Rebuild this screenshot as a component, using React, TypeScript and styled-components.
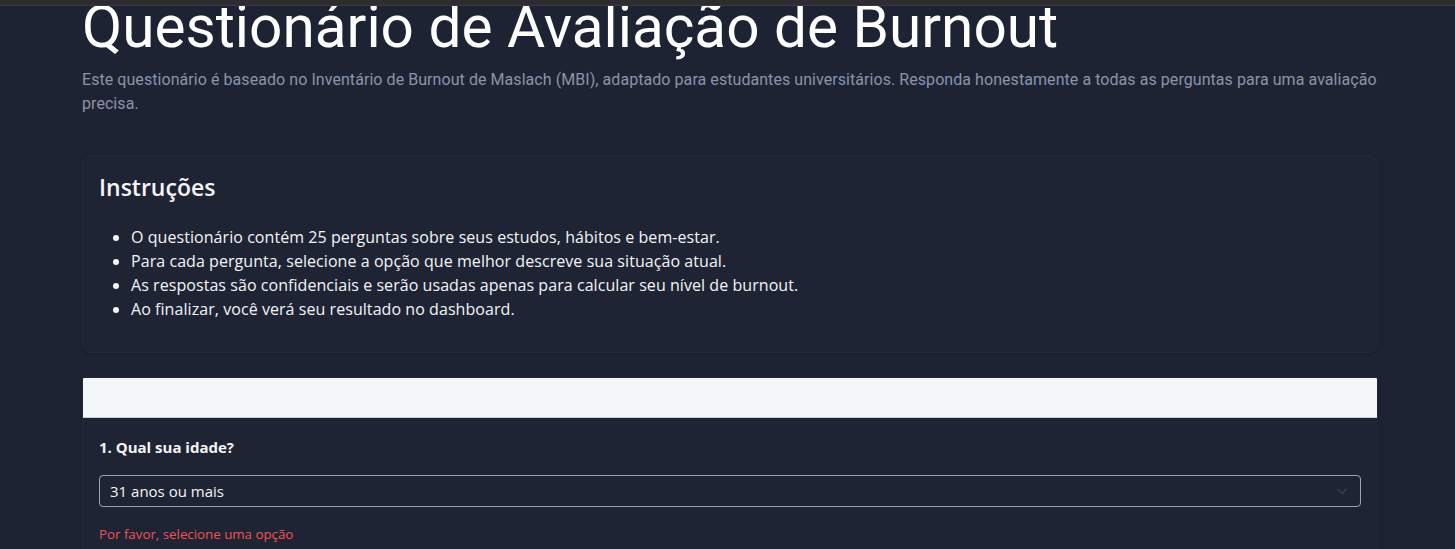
import React from 'react'
import styled, { createGlobalStyle } from 'styled-components'

const GlobalStyle = createGlobalStyle`
  html, body {
    margin: 0;
    padding: 0;
    background: #1e2333;
    overflow: hidden;
  }
  body {
    font-family: "Open Sans", "Noto Sans", sans-serif;
    color: #f3f4f6;
  }
`

const TopBar = styled.div`
  height: 5px;
  background: #2c2c31;
  border-bottom: 1px solid #3a3b41;
  position: relative;
  z-index: 2;
`

const Page = styled.main`
  width: 1296px;
  margin: 0 0 0 82px;
  padding: 0 0 40px;
  display: flex;
  flex-direction: column;
`

const Title = styled.h1`
  margin: -15px 0 0;
  font-family: Roboto, "Liberation Sans", sans-serif;
  font-weight: 400;
  font-size: 58.5px;
  line-height: 72px;
  color: #ffffff;
  white-space: nowrap;
`

const Lead = styled.p`
  margin: 5px 0 0;
  font-family: Roboto, "Liberation Sans", sans-serif;
  font-size: 16px;
  line-height: 24px;
  letter-spacing: 0.06px;
  color: #8a94a9;
`

const Card = styled.section`
  background: #1f2435;
  border: 1px solid #232839;
  border-radius: 8px;
  box-shadow: 0 1px 3px rgba(0, 0, 0, 0.25);
  padding: 16px;
  overflow: hidden;
`

const InstructionsCard = styled(Card)`
  margin-top: 39px;
  padding: 15px 16px 31px;
`

const CardTitle = styled.h2`
  margin: 0;
  font-size: 23px;
  font-weight: 600;
  line-height: 32px;
  color: #f3f4f6;
`

const List = styled.ul`
  margin: 22px 0 0;
  padding-left: 32px;
  font-size: 16px;
  line-height: 24px;
  letter-spacing: 0.06px;
  color: #f3f4f6;
`

const QuestionCard = styled(Card)`
  margin-top: 24px;
  padding: 0;
  border-radius: 2px 2px 8px 8px;
`

const CardHead = styled.div`
  height: 39px;
  background: #f4f7fa;
  border-bottom: 1px solid #c9ced6;
`

const QuestionBody = styled.div`
  padding: 18px 16px 20px;
  display: flex;
  flex-direction: column;
`

const QuestionLabel = styled.label`
  font-size: 15px;
  font-weight: 700;
  line-height: 22px;
  color: #f3f4f6;
`

const SelectBox = styled.div`
  margin-top: 17px;
  height: 30px;
  border: 1px solid #9aa3b6;
  border-radius: 4px;
  display: flex;
  align-items: center;
  justify-content: space-between;
  padding: 0 12px 0 10px;
  font-size: 15px;
  color: #f3f4f6;
`

const ErrorText = styled.span`
  margin-top: 17px;
  font-size: 13.3px;
  line-height: 20px;
  color: #f05252;
`

const Chevron = () => (
  <svg width="12" height="12" viewBox="0 0 12 12" fill="none">
    <path d="M1.5 4l4.5 4.5L10.5 4" stroke="#3a4152" strokeWidth="1.3" />
  </svg>
)

const items = [
  'O questionário contém 25 perguntas sobre seus estudos, hábitos e bem-estar.',
  'Para cada pergunta, selecione a opção que melhor descreve sua situação atual.',
  'As respostas são confidenciais e serão usadas apenas para calcular seu nível de burnout.',
  'Ao finalizar, você verá seu resultado no dashboard.',
]

export default function App() {
  return (
    <>
      <GlobalStyle />
      <TopBar />
      <Page>
        <Title>Questionário de Avaliação de Burnout</Title>
        <Lead>
          Este questionário é baseado no Inventário de Burnout de Maslach (MBI), adaptado para estudantes
          universitários. Responda honestamente a todas as perguntas para uma avaliação precisa.
        </Lead>
        <InstructionsCard>
          <CardTitle>Instruções</CardTitle>
          <List>
            {items.map(t => (
              <li key={t}>{t}</li>
            ))}
          </List>
        </InstructionsCard>
        <QuestionCard>
          <CardHead />
          <QuestionBody>
            <QuestionLabel>1. Qual sua idade?</QuestionLabel>
            <SelectBox>
              <span>31 anos ou mais</span>
              <Chevron />
            </SelectBox>
            <ErrorText>Por favor, selecione uma opção</ErrorText>
          </QuestionBody>
        </QuestionCard>
      </Page>
    </>
  )
}
